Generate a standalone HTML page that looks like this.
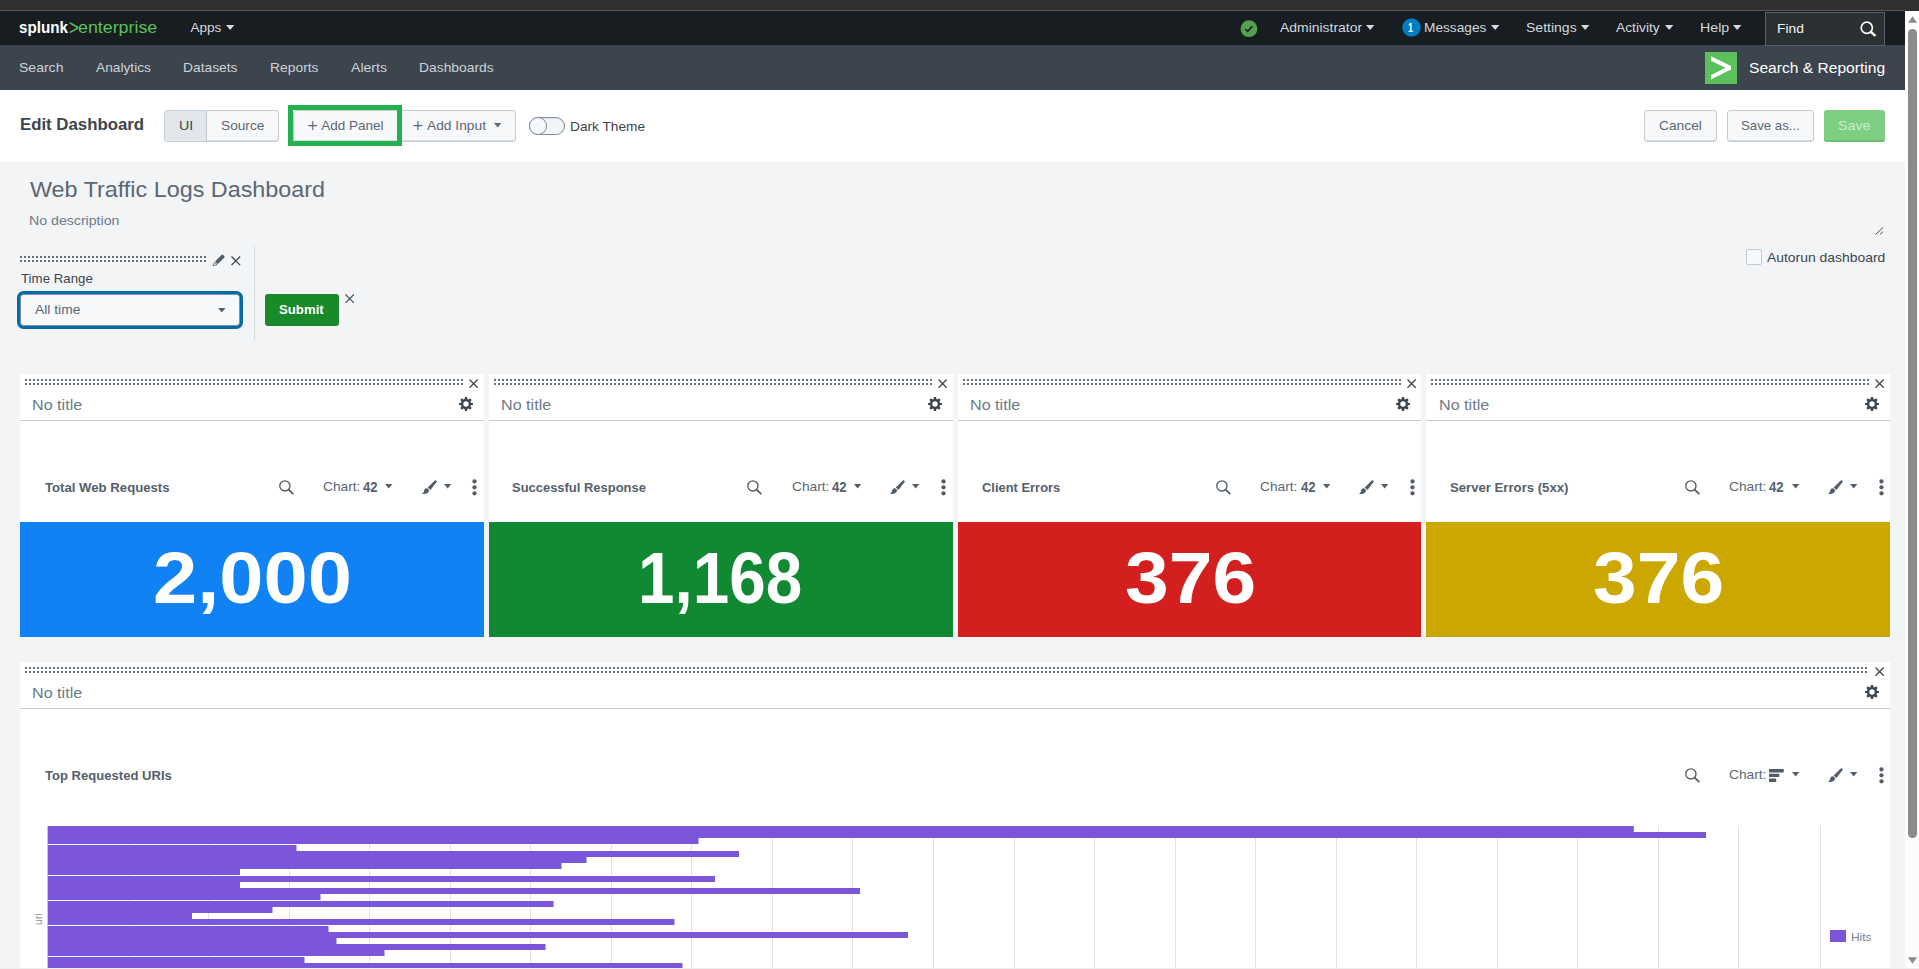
<!DOCTYPE html>
<html lang="en">
<head>
<meta charset="utf-8">
<title>Web Traffic Logs Dashboard | Splunk</title>
<style>
*{box-sizing:border-box}
html,body{margin:0;padding:0}
body{width:1919px;height:969px;overflow:hidden;position:relative;background:#f2f4f5;font-family:"Liberation Sans",sans-serif;color:#3c444d}
.abs,.t,.i,.dots,.btn,.panel{position:absolute}
.t{white-space:nowrap;transform-origin:0 0;display:block}
.i{display:block;overflow:visible}
.dots{height:6px;background:linear-gradient(to bottom,transparent 0,transparent 2px,var(--bg,#fff) 2px,var(--bg,#fff) 4px,transparent 4px,transparent 6px),repeating-linear-gradient(90deg,#646e7a 0,#646e7a 2px,transparent 2px,transparent 4px)}
.btn{border:1px solid #c3cbd4;background:#f7f8fa;border-radius:3px;box-shadow:inset 0 -1px 0 rgba(195,203,212,.6)}
.panel{background:#fff}
.phead{position:absolute;left:0;top:0;right:0;height:47px;border-bottom:1px solid #c3cbd4}
</style>
</head>
<body>
<div class="abs" style="left:0;top:0;width:1919px;height:11px;background:#303030"></div>
<div class="abs" style="left:0;top:10px;width:1905px;height:1px;background:#585858"></div>
<div class="abs" id="scrollbar" style="left:1905px;top:11px;width:14px;height:958px;background:#fcfcfc"><svg class="i" style="left:3px;top:5px" width="9" height="7" viewBox="0 0 9 7"><path d="M4.5 .3L9 6.8H0Z" fill="#8b8b8b"/></svg><div class="abs" style="left:3px;top:18px;width:9px;height:809px;border-radius:4.5px;background:#8b8b8b"></div><svg class="i" style="left:3px;top:946px" width="9" height="7" viewBox="0 0 9 7"><path d="M0 .2H9L4.5 6.7Z" fill="#8b8b8b"/></svg></div>
<header class="abs" style="left:0;top:11px;width:1905px;height:34px;background:#171d21"></header>
<div class="abs" style="left:0;top:45px;width:1905px;height:45px;background:#3c444d"></div>
<nav id="topnav">
<span class="t" style="left:19.39px;top:20.00px;font-size:16.8px;line-height:16.8px;color:#ffffff;font-weight:700;transform:scaleX(0.9075);">splunk</span>
<span class="t" style="left:69.34px;top:17.00px;font-size:22px;line-height:22px;color:#5cc05c;transform:scaleX(0.7636);">&gt;</span>
<span class="t" style="left:77.71px;top:19.00px;font-size:16.4px;line-height:16.4px;color:#5cc05c;transform:scaleX(1.0873);">enterprise</span>
<span class="t" style="left:190.40px;top:21.00px;font-size:13.6px;line-height:13.6px;color:#d3d9df;">Apps</span>
<svg class="i" style="left:226.2px;top:25.1px" width="8.4" height="5" viewBox="0 0 8.4 5"><path d="M0 0H8.4L4.2 5Z" fill="#d3d9df"/></svg>
<svg class="i" style="left:1240px;top:19.7px" width="18" height="18" viewBox="0 0 18 18"><circle cx="9" cy="8.65" r="8.45" fill="#53a051"/><path d="M5.3 9L7.7 11.4L12.4 6.2" fill="none" stroke="#171d21" stroke-width="1.6"/></svg>
<span class="t" style="left:1280.00px;top:21.00px;font-size:13.6px;line-height:13.6px;color:#d3d9df;transform:scaleX(1.0250);">Administrator</span>
<svg class="i" style="left:1366.3px;top:25.1px" width="8.4" height="5" viewBox="0 0 8.4 5"><path d="M0 0H8.4L4.2 5Z" fill="#d3d9df"/></svg>
<svg class="i" style="left:1401.5px;top:18px" width="19" height="19" viewBox="0 0 19 19"><circle cx="9.5" cy="9.5" r="9.3" fill="#007cc1"/></svg>
<span class="t" style="left:1407.92px;top:21.00px;font-size:13.4px;line-height:13.4px;color:#ffffff;font-weight:700;transform:scaleX(0.6833);">1</span>
<span class="t" style="left:1423.59px;top:21.00px;font-size:13.6px;line-height:13.6px;color:#d3d9df;transform:scaleX(1.0066);">Messages</span>
<svg class="i" style="left:1490.7px;top:25.1px" width="8.4" height="5" viewBox="0 0 8.4 5"><path d="M0 0H8.4L4.2 5Z" fill="#d3d9df"/></svg>
<span class="t" style="left:1525.77px;top:21.00px;font-size:13.6px;line-height:13.6px;color:#d3d9df;transform:scaleX(1.0312);">Settings</span>
<svg class="i" style="left:1580.5px;top:25.1px" width="8.4" height="5" viewBox="0 0 8.4 5"><path d="M0 0H8.4L4.2 5Z" fill="#d3d9df"/></svg>
<span class="t" style="left:1616.30px;top:21.00px;font-size:13.6px;line-height:13.6px;color:#d3d9df;transform:scaleX(1.0163);">Activity</span>
<svg class="i" style="left:1664.7px;top:25.1px" width="8.4" height="5" viewBox="0 0 8.4 5"><path d="M0 0H8.4L4.2 5Z" fill="#d3d9df"/></svg>
<span class="t" style="left:1699.56px;top:21.00px;font-size:13.6px;line-height:13.6px;color:#d3d9df;transform:scaleX(1.0444);">Help</span>
<svg class="i" style="left:1733.2px;top:25.1px" width="8.4" height="5" viewBox="0 0 8.4 5"><path d="M0 0H8.4L4.2 5Z" fill="#d3d9df"/></svg>
<div class="abs" style="left:1765px;top:12px;width:120px;height:34px;background:#2b3033;border:1px solid #56616c"></div>
<span class="t" style="left:1776.98px;top:22.00px;font-size:13.6px;line-height:13.6px;color:#f2f4f5;transform:scaleX(1.0160);">Find</span>
<svg class="i" style="left:1859.6px;top:21.3px" width="17" height="16" viewBox="0 0 17 16"><circle cx="6.8" cy="6.8" r="5.6" fill="none" stroke="#fff" stroke-width="1.7"/><path d="M11 11L14.8 14.3" stroke="#fff" stroke-width="2.4" stroke-linecap="round"/></svg>
</nav>
<nav id="appnav">
<span class="t" style="left:18.97px;top:61.00px;font-size:13.6px;line-height:13.6px;color:#cdd3d9;transform:scaleX(1.0317);">Search</span>
<span class="t" style="left:95.90px;top:61.00px;font-size:13.6px;line-height:13.6px;color:#cdd3d9;transform:scaleX(1.0093);">Analytics</span>
<span class="t" style="left:183.28px;top:61.00px;font-size:13.6px;line-height:13.6px;color:#cdd3d9;transform:scaleX(1.0154);">Datasets</span>
<span class="t" style="left:269.68px;top:61.00px;font-size:13.6px;line-height:13.6px;color:#cdd3d9;transform:scaleX(1.0196);">Reports</span>
<span class="t" style="left:351.00px;top:61.00px;font-size:13.6px;line-height:13.6px;color:#cdd3d9;transform:scaleX(1.0353);">Alerts</span>
<span class="t" style="left:418.78px;top:61.00px;font-size:13.6px;line-height:13.6px;color:#cdd3d9;transform:scaleX(1.0194);">Dashboards</span>
<svg class="i" style="left:1705px;top:52px" width="32" height="32" viewBox="0 0 32 32"><rect width="32" height="32" fill="#5cc05c"/><path d="M5.95 4.3L26 14V17.5L5.95 27.6V23.3L20.6 15.8L5.95 8.8Z" fill="#fff"/></svg>
<span class="t" style="left:1748.59px;top:60.00px;font-size:15.5px;line-height:15.5px;color:#ffffff;transform:scaleX(1.0060);">Search &amp; Reporting</span>
</nav>
<section id="editbar" class="abs" style="left:0;top:90px;width:1905px;height:72px;background:#fff"></section>
<span class="t" style="left:19.81px;top:116.00px;font-size:17px;line-height:17px;color:#3c444d;font-weight:700;transform:scaleX(0.9871);">Edit Dashboard</span>
<div class="btn" style="left:164px;top:110px;width:115px;height:32px"></div>
<div class="abs" style="left:165px;top:111px;width:42px;height:30px;background:#e1e6eb;border-right:1px solid #c3cbd4;border-radius:2px 0 0 2px"></div>
<span class="t" style="left:178.55px;top:119.00px;font-size:13.5px;line-height:13.5px;color:#3c444d;transform:scaleX(1.0545);">UI</span>
<span class="t" style="left:220.99px;top:119.00px;font-size:13.5px;line-height:13.5px;color:#5c6773;transform:scaleX(1.0146);">Source</span>
<div class="btn" style="left:293px;top:110px;width:223px;height:32px"></div>
<div class="abs" style="left:397px;top:111px;width:1px;height:30px;background:#c3cbd4"></div>
<div class="abs" style="left:288px;top:105px;width:114px;height:41px;border:5px solid #22b14c"></div>
<span class="t" style="left:306.7px;top:118px;font:400 14px/14px 'DejaVu Sans',sans-serif;color:#5c6773">+</span>
<span class="t" style="left:321.30px;top:119.00px;font-size:13.5px;line-height:13.5px;color:#5c6773;">Add Panel</span>
<span class="t" style="left:411.9px;top:118px;font:400 14px/14px 'DejaVu Sans',sans-serif;color:#5c6773">+</span>
<span class="t" style="left:426.60px;top:119.00px;font-size:13.5px;line-height:13.5px;color:#5c6773;transform:scaleX(1.0207);">Add Input</span>
<svg class="i" style="left:493.5px;top:123.2px" width="7.4" height="4.6" viewBox="0 0 7.4 4.6"><path d="M0 0H7.4L3.7 4.6Z" fill="#5c6773"/></svg>
<div class="abs" style="left:528.5px;top:117px;width:36.5px;height:18px;border:1px solid #818d99;border-radius:9px;background:#f4f5f7;box-shadow:inset 0 1px 1px rgba(60,68,77,.12)"></div>
<div class="abs" style="left:528.5px;top:117px;width:18px;height:18px;border:1px solid #818d99;border-radius:9px;background:#f7f8fa"></div>
<span class="t" style="left:569.99px;top:120.00px;font-size:13.5px;line-height:13.5px;color:#3c444d;transform:scaleX(1.0137);">Dark Theme</span>
<div class="btn" style="left:1644px;top:110px;width:73px;height:32px"></div>
<span class="t" style="left:1658.98px;top:119.00px;font-size:13.5px;line-height:13.5px;color:#5c6773;transform:scaleX(1.0200);">Cancel</span>
<div class="btn" style="left:1727px;top:110px;width:87px;height:32px"></div>
<span class="t" style="left:1741.12px;top:119.00px;font-size:13.5px;line-height:13.5px;color:#5c6773;transform:scaleX(0.9810);">Save as...</span>
<div class="abs" style="left:1824px;top:110px;width:61px;height:32px;border-radius:3px;background:#7fcf82;box-shadow:inset 0 -2px 0 #6fbf73"></div>
<span class="t" style="left:1838.34px;top:119.00px;font-size:13.5px;line-height:13.5px;color:#c9edcb;transform:scaleX(1.0552);">Save</span>
<main id="dashboard">
<span class="t" style="left:29.70px;top:179.00px;font-size:22.4px;line-height:22.4px;color:#5c6773;transform:scaleX(1.0426);">Web Traffic Logs Dashboard</span>
<span class="t" style="left:28.52px;top:214.00px;font-size:13.1px;line-height:13.1px;color:#6e7a87;transform:scaleX(1.0805);">No description</span>
<svg class="i" style="left:1875px;top:226.5px" width="9" height="8" viewBox="0 0 9 8"><path d="M.5 7.4L8 .6M5 7.4L8 4.6" stroke="#4a4a4a" stroke-width="1" fill="none"/></svg>
<div class="abs" style="left:1746px;top:249px;width:16px;height:16px;border:1px solid #c3cbd4;border-radius:2px;background:#f7f8fa"></div>
<span class="t" style="left:1766.80px;top:251.00px;font-size:13.5px;line-height:13.5px;color:#3c444d;transform:scaleX(1.0298);">Autorun dashboard</span>
<div class="dots" style="--bg:#f2f4f5;left:20px;top:256px;width:186px"></div>
<svg class="i" style="left:212px;top:254.4px" width="13" height="12" viewBox="0 0 13 12"><path d="M3.1 7.6L9.4 .9a1.2 1.2 0 0 1 1.7 0l1.1 1.1a1.2 1.2 0 0 1 0 1.7L5.6 10.2Z" fill="#525c68"/><path d="M2.5 8.3L5 10.8L.9 11.7Z" fill="#fff" stroke="#525c68" stroke-width=".8" stroke-linejoin="round"/></svg>
<svg class="i" style="left:230.6px;top:255.6px" width="9.6" height="9.6" viewBox="0 0 9.6 9.6"><path d="M.5 .5L9.1 9.1M9.1 .5L.5 9.1" stroke="#3c444d" stroke-width="1.3" fill="none"/></svg>
<span class="t" style="left:20.70px;top:272.00px;font-size:13.5px;line-height:13.5px;color:#3c444d;transform:scaleX(0.9836);">Time Range</span>
<div class="abs" style="left:20px;top:294px;width:220px;height:32px;border:1px solid #7c95aa;border-radius:3.5px;background:#f7f8fa;box-shadow:0 0 0 3px #066aa9"></div>
<span class="t" style="left:35.30px;top:303.00px;font-size:13.5px;line-height:13.5px;color:#5c6773;transform:scaleX(1.0250);">All time</span>
<svg class="i" style="left:217.8px;top:308px" width="7.6" height="4.4" viewBox="0 0 7.6 4.4"><path d="M0 0H7.6L3.8 4.4Z" fill="#55606c"/></svg>
<div class="abs" style="left:254px;top:246px;width:1px;height:93px;background:repeating-linear-gradient(to bottom,#b5bdc6 0,#b5bdc6 1px,transparent 1px,transparent 2px)"></div>
<div class="abs" style="left:265px;top:294px;width:74px;height:32px;border-radius:3px;background:#1a8929"></div>
<span class="t" style="left:279.23px;top:303.00px;font-size:13.6px;line-height:13.6px;color:#ffffff;font-weight:700;transform:scaleX(0.9711);">Submit</span>
<svg class="i" style="left:345.3px;top:294px" width="9.4" height="9.4" viewBox="0 0 9.4 9.4"><path d="M.5 .5L8.9 8.9M8.9 .5L.5 8.9" stroke="#4a535e" stroke-width="1.2" fill="none"/></svg>
<article class="panel" style="left:20.0px;top:374px;width:463.75px;height:262.6px">
<div class="abs" style="left:0;top:148px;width:463.75px;height:114.6px;background:#1182f3"></div>
</article>
<div class="dots" style="left:25.0px;top:379px;width:438.0px"></div>
<svg class="i" style="left:469.2px;top:378.9px" width="9.2" height="9.2" viewBox="0 0 9.2 9.2"><path d="M.5 .5L8.7 8.7M8.7 .5L.5 8.7" stroke="#3c444d" stroke-width="1.25" fill="none"/></svg>
<span class="t" style="left:32.35px;top:397.00px;font-size:15.4px;line-height:15.4px;color:#6e7a87;transform:scaleX(1.0478);">No title</span>
<svg class="i" style="left:458.75px;top:397px" width="14" height="14" viewBox="0 0 14 14"><path fill="#3c444d" fill-rule="evenodd" d="M5.64 2.09L5.90 0.09L8.10 0.09L8.36 2.09L9.51 2.56L11.11 1.34L12.66 2.89L11.44 4.49L11.91 5.64L13.91 5.90L13.91 8.10L11.91 8.36L11.44 9.51L12.66 11.11L11.11 12.66L9.51 11.44L8.36 11.91L8.10 13.91L5.90 13.91L5.64 11.91L4.49 11.44L2.89 12.66L1.34 11.11L2.56 9.51L2.09 8.36L0.09 8.10L0.09 5.90L2.09 5.64L2.56 4.49L1.34 2.89L2.89 1.34L4.49 2.56ZM4.30 7.00a2.70 2.70 0 1 0 5.40 0a2.70 2.70 0 1 0 -5.40 0Z"/></svg>
<div class="abs" style="left:20.0px;top:420px;width:463.75px;height:1px;background:#c3cbd4"></div>
<span class="t" style="left:44.70px;top:481.00px;font-size:13.3px;line-height:13.3px;color:#55606c;font-weight:700;transform:scaleX(0.9896);">Total Web Requests</span>
<svg class="i" style="left:278.6px;top:479.6px" width="15" height="15" viewBox="0 0 15 15"><circle cx="5.9" cy="5.9" r="5.1" fill="none" stroke="#525c68" stroke-width="1.35"/><path d="M9.6 9.6L13.8 13.6" stroke="#525c68" stroke-width="1.8" stroke-linecap="round"/></svg>
<span class="t" style="left:322.79px;top:480.00px;font-size:13.6px;line-height:13.6px;color:#5c6773;transform:scaleX(1.0114);">Chart:</span>
<span class="t" style="left:363.20px;top:481.00px;font-size:13.9px;line-height:13.9px;color:#55606c;font-weight:700;transform:scaleX(0.9467);">42</span>
<svg class="i" style="left:385.3px;top:484.1px" width="7.3" height="4.6" viewBox="0 0 7.3 4.6"><path d="M0 0H7.3L3.65 4.6Z" fill="#55606c"/></svg>
<svg class="i" style="left:421.5px;top:479.8px" width="15" height="14.5" viewBox="0 0 15 14.5"><path d="M13.3 0L15 1.5L8.4 9.9L5.7 7.5Z" fill="#525c68"/><path d="M5.2 8.3C3.6 8 2.3 9.1 2.1 10.7C2 12 1.1 13.2 0 13.8C2.6 14.6 6.4 13.8 7.3 10.3Z" fill="#525c68"/></svg>
<svg class="i" style="left:443.7px;top:484.1px" width="7.3" height="4.6" viewBox="0 0 7.3 4.6"><path d="M0 0H7.3L3.65 4.6Z" fill="#55606c"/></svg>
<svg class="i" style="left:472.4px;top:478.9px" width="5" height="17" viewBox="0 0 5 17"><circle cx="2.5" cy="2.4" r="2.12" fill="#525c68"/><circle cx="2.5" cy="8.3" r="2.12" fill="#525c68"/><circle cx="2.5" cy="14.3" r="2.12" fill="#525c68"/></svg>
<span class="t" style="left:153.41px;top:542.00px;font-size:72.6px;line-height:72.6px;color:#ffffff;font-weight:700;transform:scaleX(1.0949);">2,000</span>
<article class="panel" style="left:488.75px;top:374px;width:463.75px;height:262.6px">
<div class="abs" style="left:0;top:148px;width:463.75px;height:114.6px;background:#118832"></div>
</article>
<div class="dots" style="left:493.75px;top:379px;width:438.0px"></div>
<svg class="i" style="left:937.95px;top:378.9px" width="9.2" height="9.2" viewBox="0 0 9.2 9.2"><path d="M.5 .5L8.7 8.7M8.7 .5L.5 8.7" stroke="#3c444d" stroke-width="1.25" fill="none"/></svg>
<span class="t" style="left:501.10px;top:397.00px;font-size:15.4px;line-height:15.4px;color:#6e7a87;transform:scaleX(1.0478);">No title</span>
<svg class="i" style="left:927.5px;top:397px" width="14" height="14" viewBox="0 0 14 14"><path fill="#3c444d" fill-rule="evenodd" d="M5.64 2.09L5.90 0.09L8.10 0.09L8.36 2.09L9.51 2.56L11.11 1.34L12.66 2.89L11.44 4.49L11.91 5.64L13.91 5.90L13.91 8.10L11.91 8.36L11.44 9.51L12.66 11.11L11.11 12.66L9.51 11.44L8.36 11.91L8.10 13.91L5.90 13.91L5.64 11.91L4.49 11.44L2.89 12.66L1.34 11.11L2.56 9.51L2.09 8.36L0.09 8.10L0.09 5.90L2.09 5.64L2.56 4.49L1.34 2.89L2.89 1.34L4.49 2.56ZM4.30 7.00a2.70 2.70 0 1 0 5.40 0a2.70 2.70 0 1 0 -5.40 0Z"/></svg>
<div class="abs" style="left:488.75px;top:420px;width:463.75px;height:1px;background:#c3cbd4"></div>
<span class="t" style="left:512.48px;top:481.00px;font-size:13.3px;line-height:13.3px;color:#55606c;font-weight:700;transform:scaleX(0.9739);">Successful Response</span>
<svg class="i" style="left:747.35px;top:479.6px" width="15" height="15" viewBox="0 0 15 15"><circle cx="5.9" cy="5.9" r="5.1" fill="none" stroke="#525c68" stroke-width="1.35"/><path d="M9.6 9.6L13.8 13.6" stroke="#525c68" stroke-width="1.8" stroke-linecap="round"/></svg>
<span class="t" style="left:791.54px;top:480.00px;font-size:13.6px;line-height:13.6px;color:#5c6773;transform:scaleX(1.0114);">Chart:</span>
<span class="t" style="left:831.95px;top:481.00px;font-size:13.9px;line-height:13.9px;color:#55606c;font-weight:700;transform:scaleX(0.9467);">42</span>
<svg class="i" style="left:854.05px;top:484.1px" width="7.3" height="4.6" viewBox="0 0 7.3 4.6"><path d="M0 0H7.3L3.65 4.6Z" fill="#55606c"/></svg>
<svg class="i" style="left:890.25px;top:479.8px" width="15" height="14.5" viewBox="0 0 15 14.5"><path d="M13.3 0L15 1.5L8.4 9.9L5.7 7.5Z" fill="#525c68"/><path d="M5.2 8.3C3.6 8 2.3 9.1 2.1 10.7C2 12 1.1 13.2 0 13.8C2.6 14.6 6.4 13.8 7.3 10.3Z" fill="#525c68"/></svg>
<svg class="i" style="left:912.45px;top:484.1px" width="7.3" height="4.6" viewBox="0 0 7.3 4.6"><path d="M0 0H7.3L3.65 4.6Z" fill="#55606c"/></svg>
<svg class="i" style="left:941.15px;top:478.9px" width="5" height="17" viewBox="0 0 5 17"><circle cx="2.5" cy="2.4" r="2.12" fill="#525c68"/><circle cx="2.5" cy="8.3" r="2.12" fill="#525c68"/><circle cx="2.5" cy="14.3" r="2.12" fill="#525c68"/></svg>
<span class="t" style="left:638.29px;top:542.00px;font-size:72.6px;line-height:72.6px;color:#ffffff;font-weight:700;transform:scaleX(0.9034);">1,168</span>
<article class="panel" style="left:957.5px;top:374px;width:463.75px;height:262.6px">
<div class="abs" style="left:0;top:148px;width:463.75px;height:114.6px;background:#d41f1f"></div>
</article>
<div class="dots" style="left:962.5px;top:379px;width:438.0px"></div>
<svg class="i" style="left:1406.7px;top:378.9px" width="9.2" height="9.2" viewBox="0 0 9.2 9.2"><path d="M.5 .5L8.7 8.7M8.7 .5L.5 8.7" stroke="#3c444d" stroke-width="1.25" fill="none"/></svg>
<span class="t" style="left:969.85px;top:397.00px;font-size:15.4px;line-height:15.4px;color:#6e7a87;transform:scaleX(1.0478);">No title</span>
<svg class="i" style="left:1396.25px;top:397px" width="14" height="14" viewBox="0 0 14 14"><path fill="#3c444d" fill-rule="evenodd" d="M5.64 2.09L5.90 0.09L8.10 0.09L8.36 2.09L9.51 2.56L11.11 1.34L12.66 2.89L11.44 4.49L11.91 5.64L13.91 5.90L13.91 8.10L11.91 8.36L11.44 9.51L12.66 11.11L11.11 12.66L9.51 11.44L8.36 11.91L8.10 13.91L5.90 13.91L5.64 11.91L4.49 11.44L2.89 12.66L1.34 11.11L2.56 9.51L2.09 8.36L0.09 8.10L0.09 5.90L2.09 5.64L2.56 4.49L1.34 2.89L2.89 1.34L4.49 2.56ZM4.30 7.00a2.70 2.70 0 1 0 5.40 0a2.70 2.70 0 1 0 -5.40 0Z"/></svg>
<div class="abs" style="left:957.5px;top:420px;width:463.75px;height:1px;background:#c3cbd4"></div>
<span class="t" style="left:982.20px;top:481.00px;font-size:13.3px;line-height:13.3px;color:#55606c;font-weight:700;transform:scaleX(0.9713);">Client Errors</span>
<svg class="i" style="left:1216.1px;top:479.6px" width="15" height="15" viewBox="0 0 15 15"><circle cx="5.9" cy="5.9" r="5.1" fill="none" stroke="#525c68" stroke-width="1.35"/><path d="M9.6 9.6L13.8 13.6" stroke="#525c68" stroke-width="1.8" stroke-linecap="round"/></svg>
<span class="t" style="left:1260.29px;top:480.00px;font-size:13.6px;line-height:13.6px;color:#5c6773;transform:scaleX(1.0114);">Chart:</span>
<span class="t" style="left:1300.70px;top:481.00px;font-size:13.9px;line-height:13.9px;color:#55606c;font-weight:700;transform:scaleX(0.9467);">42</span>
<svg class="i" style="left:1322.8px;top:484.1px" width="7.3" height="4.6" viewBox="0 0 7.3 4.6"><path d="M0 0H7.3L3.65 4.6Z" fill="#55606c"/></svg>
<svg class="i" style="left:1359.0px;top:479.8px" width="15" height="14.5" viewBox="0 0 15 14.5"><path d="M13.3 0L15 1.5L8.4 9.9L5.7 7.5Z" fill="#525c68"/><path d="M5.2 8.3C3.6 8 2.3 9.1 2.1 10.7C2 12 1.1 13.2 0 13.8C2.6 14.6 6.4 13.8 7.3 10.3Z" fill="#525c68"/></svg>
<svg class="i" style="left:1381.2px;top:484.1px" width="7.3" height="4.6" viewBox="0 0 7.3 4.6"><path d="M0 0H7.3L3.65 4.6Z" fill="#55606c"/></svg>
<svg class="i" style="left:1409.9px;top:478.9px" width="5" height="17" viewBox="0 0 5 17"><circle cx="2.5" cy="2.4" r="2.12" fill="#525c68"/><circle cx="2.5" cy="8.3" r="2.12" fill="#525c68"/><circle cx="2.5" cy="14.3" r="2.12" fill="#525c68"/></svg>
<span class="t" style="left:1124.74px;top:542.00px;font-size:72.6px;line-height:72.6px;color:#ffffff;font-weight:700;transform:scaleX(1.0821);">376</span>
<article class="panel" style="left:1426.25px;top:374px;width:463.75px;height:262.6px">
<div class="abs" style="left:0;top:148px;width:463.75px;height:114.6px;background:#cba700"></div>
</article>
<div class="dots" style="left:1431.25px;top:379px;width:438.0px"></div>
<svg class="i" style="left:1875.45px;top:378.9px" width="9.2" height="9.2" viewBox="0 0 9.2 9.2"><path d="M.5 .5L8.7 8.7M8.7 .5L.5 8.7" stroke="#3c444d" stroke-width="1.25" fill="none"/></svg>
<span class="t" style="left:1438.60px;top:397.00px;font-size:15.4px;line-height:15.4px;color:#6e7a87;transform:scaleX(1.0478);">No title</span>
<svg class="i" style="left:1865.0px;top:397px" width="14" height="14" viewBox="0 0 14 14"><path fill="#3c444d" fill-rule="evenodd" d="M5.64 2.09L5.90 0.09L8.10 0.09L8.36 2.09L9.51 2.56L11.11 1.34L12.66 2.89L11.44 4.49L11.91 5.64L13.91 5.90L13.91 8.10L11.91 8.36L11.44 9.51L12.66 11.11L11.11 12.66L9.51 11.44L8.36 11.91L8.10 13.91L5.90 13.91L5.64 11.91L4.49 11.44L2.89 12.66L1.34 11.11L2.56 9.51L2.09 8.36L0.09 8.10L0.09 5.90L2.09 5.64L2.56 4.49L1.34 2.89L2.89 1.34L4.49 2.56ZM4.30 7.00a2.70 2.70 0 1 0 5.40 0a2.70 2.70 0 1 0 -5.40 0Z"/></svg>
<div class="abs" style="left:1426.25px;top:420px;width:463.75px;height:1px;background:#c3cbd4"></div>
<span class="t" style="left:1449.96px;top:481.00px;font-size:13.3px;line-height:13.3px;color:#55606c;font-weight:700;transform:scaleX(0.9890);">Server Errors (5xx)</span>
<svg class="i" style="left:1684.85px;top:479.6px" width="15" height="15" viewBox="0 0 15 15"><circle cx="5.9" cy="5.9" r="5.1" fill="none" stroke="#525c68" stroke-width="1.35"/><path d="M9.6 9.6L13.8 13.6" stroke="#525c68" stroke-width="1.8" stroke-linecap="round"/></svg>
<span class="t" style="left:1729.04px;top:480.00px;font-size:13.6px;line-height:13.6px;color:#5c6773;transform:scaleX(1.0114);">Chart:</span>
<span class="t" style="left:1769.45px;top:481.00px;font-size:13.9px;line-height:13.9px;color:#55606c;font-weight:700;transform:scaleX(0.9467);">42</span>
<svg class="i" style="left:1791.55px;top:484.1px" width="7.3" height="4.6" viewBox="0 0 7.3 4.6"><path d="M0 0H7.3L3.65 4.6Z" fill="#55606c"/></svg>
<svg class="i" style="left:1827.75px;top:479.8px" width="15" height="14.5" viewBox="0 0 15 14.5"><path d="M13.3 0L15 1.5L8.4 9.9L5.7 7.5Z" fill="#525c68"/><path d="M5.2 8.3C3.6 8 2.3 9.1 2.1 10.7C2 12 1.1 13.2 0 13.8C2.6 14.6 6.4 13.8 7.3 10.3Z" fill="#525c68"/></svg>
<svg class="i" style="left:1849.95px;top:484.1px" width="7.3" height="4.6" viewBox="0 0 7.3 4.6"><path d="M0 0H7.3L3.65 4.6Z" fill="#55606c"/></svg>
<svg class="i" style="left:1878.65px;top:478.9px" width="5" height="17" viewBox="0 0 5 17"><circle cx="2.5" cy="2.4" r="2.12" fill="#525c68"/><circle cx="2.5" cy="8.3" r="2.12" fill="#525c68"/><circle cx="2.5" cy="14.3" r="2.12" fill="#525c68"/></svg>
<span class="t" style="left:1593.49px;top:542.00px;font-size:72.6px;line-height:72.6px;color:#ffffff;font-weight:700;transform:scaleX(1.0821);">376</span>
<article class="panel" style="left:20px;top:662px;width:1870px;height:307px"></article>
<div class="dots" style="left:25px;top:667px;width:1844.25px"></div>
<svg class="i" style="left:1875.45px;top:666.9px" width="9.2" height="9.2" viewBox="0 0 9.2 9.2"><path d="M.5 .5L8.7 8.7M8.7 .5L.5 8.7" stroke="#3c444d" stroke-width="1.25" fill="none"/></svg>
<span class="t" style="left:32.35px;top:685.00px;font-size:15.4px;line-height:15.4px;color:#6e7a87;transform:scaleX(1.0478);">No title</span>
<svg class="i" style="left:1865px;top:685px" width="14" height="14" viewBox="0 0 14 14"><path fill="#3c444d" fill-rule="evenodd" d="M5.64 2.09L5.90 0.09L8.10 0.09L8.36 2.09L9.51 2.56L11.11 1.34L12.66 2.89L11.44 4.49L11.91 5.64L13.91 5.90L13.91 8.10L11.91 8.36L11.44 9.51L12.66 11.11L11.11 12.66L9.51 11.44L8.36 11.91L8.10 13.91L5.90 13.91L5.64 11.91L4.49 11.44L2.89 12.66L1.34 11.11L2.56 9.51L2.09 8.36L0.09 8.10L0.09 5.90L2.09 5.64L2.56 4.49L1.34 2.89L2.89 1.34L4.49 2.56ZM4.30 7.00a2.70 2.70 0 1 0 5.40 0a2.70 2.70 0 1 0 -5.40 0Z"/></svg>
<div class="abs" style="left:20px;top:708px;width:1870px;height:1px;background:#c3cbd4"></div>
<span class="t" style="left:44.70px;top:769.00px;font-size:13.3px;line-height:13.3px;color:#55606c;font-weight:700;transform:scaleX(0.9829);">Top Requested URIs</span>
<svg class="i" style="left:1684.85px;top:767.6px" width="15" height="15" viewBox="0 0 15 15"><circle cx="5.9" cy="5.9" r="5.1" fill="none" stroke="#525c68" stroke-width="1.35"/><path d="M9.6 9.6L13.8 13.6" stroke="#525c68" stroke-width="1.8" stroke-linecap="round"/></svg>
<span class="t" style="left:1729.04px;top:768.00px;font-size:13.6px;line-height:13.6px;color:#5c6773;transform:scaleX(1.0114);">Chart:</span>
<svg class="i" style="left:1769.15px;top:769px" width="15" height="13" viewBox="0 0 15 13"><path d="M0 0H14.7V3.4H0ZM0 4.7H10.2V8.1H0ZM0 9.5H7.2V12.9H0Z" fill="#525c68"/></svg>
<svg class="i" style="left:1791.55px;top:772.1px" width="7.3" height="4.6" viewBox="0 0 7.3 4.6"><path d="M0 0H7.3L3.65 4.6Z" fill="#55606c"/></svg>
<svg class="i" style="left:1827.75px;top:767.8px" width="15" height="14.5" viewBox="0 0 15 14.5"><path d="M13.3 0L15 1.5L8.4 9.9L5.7 7.5Z" fill="#525c68"/><path d="M5.2 8.3C3.6 8 2.3 9.1 2.1 10.7C2 12 1.1 13.2 0 13.8C2.6 14.6 6.4 13.8 7.3 10.3Z" fill="#525c68"/></svg>
<svg class="i" style="left:1849.95px;top:772.1px" width="7.3" height="4.6" viewBox="0 0 7.3 4.6"><path d="M0 0H7.3L3.65 4.6Z" fill="#55606c"/></svg>
<svg class="i" style="left:1878.65px;top:766.9px" width="5" height="17" viewBox="0 0 5 17"><circle cx="2.5" cy="2.4" r="2.12" fill="#525c68"/><circle cx="2.5" cy="8.3" r="2.12" fill="#525c68"/><circle cx="2.5" cy="14.3" r="2.12" fill="#525c68"/></svg>
<svg class="i" style="left:20px;top:820px" width="1870" height="149" viewBox="20 820 1870 149"><rect x="128" y="826" width="1" height="143" fill="#e1e1e1"/><rect x="208" y="826" width="1" height="143" fill="#e1e1e1"/><rect x="289" y="826" width="1" height="143" fill="#e1e1e1"/><rect x="369" y="826" width="1" height="143" fill="#e1e1e1"/><rect x="450" y="826" width="1" height="143" fill="#e1e1e1"/><rect x="530" y="826" width="1" height="143" fill="#e1e1e1"/><rect x="611" y="826" width="1" height="143" fill="#e1e1e1"/><rect x="691" y="826" width="1" height="143" fill="#e1e1e1"/><rect x="772" y="826" width="1" height="143" fill="#e1e1e1"/><rect x="852" y="826" width="1" height="143" fill="#e1e1e1"/><rect x="933" y="826" width="1" height="143" fill="#e1e1e1"/><rect x="1014" y="826" width="1" height="143" fill="#e1e1e1"/><rect x="1094" y="826" width="1" height="143" fill="#e1e1e1"/><rect x="1175" y="826" width="1" height="143" fill="#e1e1e1"/><rect x="1255" y="826" width="1" height="143" fill="#e1e1e1"/><rect x="1336" y="826" width="1" height="143" fill="#e1e1e1"/><rect x="1416" y="826" width="1" height="143" fill="#e1e1e1"/><rect x="1497" y="826" width="1" height="143" fill="#e1e1e1"/><rect x="1577" y="826" width="1" height="143" fill="#e1e1e1"/><rect x="1658" y="826" width="1" height="143" fill="#e1e1e1"/><rect x="1738" y="826" width="1" height="143" fill="#e1e1e1"/><rect x="1820" y="826" width="1" height="143" fill="#e1e1e1"/><rect x="47" y="826" width="1" height="143" fill="#c9c9c9"/><rect x="48" y="826" width="1585.8" height="6" fill="#7b56db"/><rect x="48" y="832" width="1658.0" height="6" fill="#7b56db"/><rect x="48" y="838" width="650.5" height="6" fill="#7b56db"/><rect x="48" y="845" width="248.5" height="6" fill="#7b56db"/><rect x="48" y="851" width="691.0" height="6" fill="#7b56db"/><rect x="48" y="857" width="538.5" height="6" fill="#7b56db"/><rect x="48" y="863" width="513.5" height="6" fill="#7b56db"/><rect x="48" y="869" width="192.0" height="6" fill="#7b56db"/><rect x="48" y="876" width="667.0" height="6" fill="#7b56db"/><rect x="48" y="882" width="192.0" height="6" fill="#7b56db"/><rect x="48" y="888" width="812.0" height="6" fill="#7b56db"/><rect x="48" y="894" width="272.5" height="6" fill="#7b56db"/><rect x="48" y="901" width="505.5" height="6" fill="#7b56db"/><rect x="48" y="907" width="224.5" height="6" fill="#7b56db"/><rect x="48" y="913" width="144.0" height="6" fill="#7b56db"/><rect x="48" y="919" width="626.5" height="6" fill="#7b56db"/><rect x="48" y="926" width="280.5" height="6" fill="#7b56db"/><rect x="48" y="932" width="860.0" height="6" fill="#7b56db"/><rect x="48" y="938" width="288.5" height="6" fill="#7b56db"/><rect x="48" y="944" width="497.5" height="6" fill="#7b56db"/><rect x="48" y="950" width="336.5" height="6" fill="#7b56db"/><rect x="48" y="957" width="256.5" height="6" fill="#7b56db"/><rect x="48" y="963" width="634.5" height="6" fill="#7b56db"/><rect x="1830" y="930" width="16" height="12" fill="#7b56db"/></svg>
<span class="t" style="left:1850.94px;top:932.00px;font-size:11.3px;line-height:11.3px;color:#78828e;transform:scaleX(1.0556);">Hits</span>
<span class="t" style="left:34.3px;top:925.4px;font-size:10.4px;line-height:10.4px;color:#8a929c;transform:rotate(-90deg)">uri</span>
</main>
<div class="abs" style="left:0;top:968px;width:1919px;height:1px;background:#eeeeee"></div>
</body>
</html>
